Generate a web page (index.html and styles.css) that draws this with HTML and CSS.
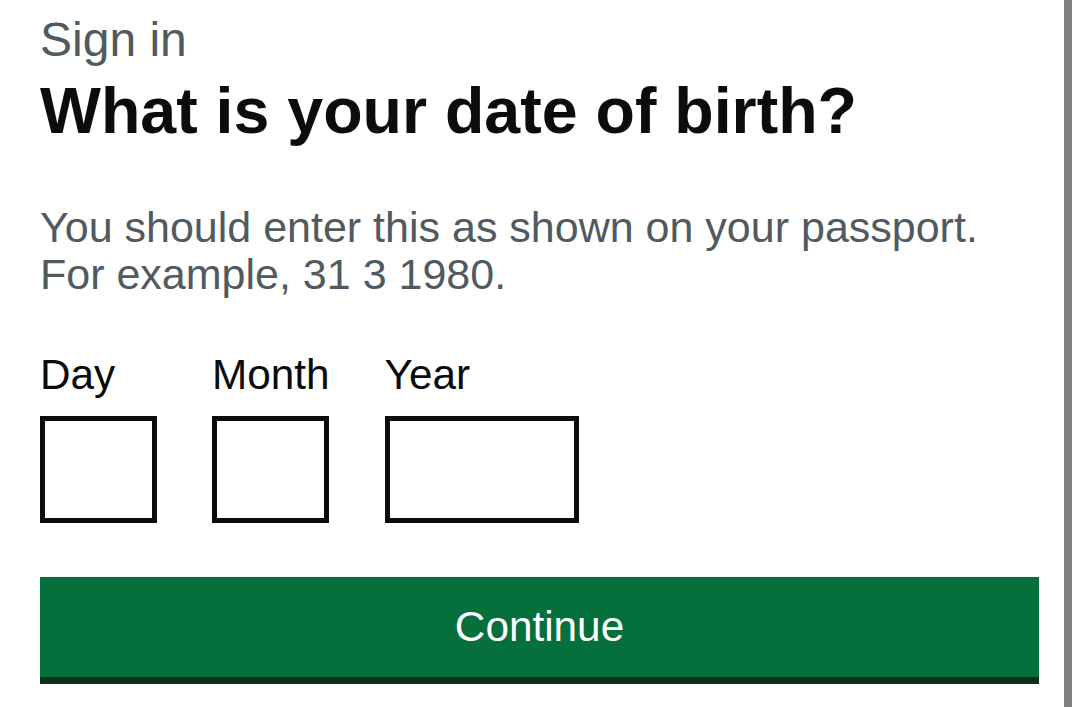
FILE: index.html
```html
<!DOCTYPE html>
<html lang="en">
<head>
<meta charset="utf-8">
<title>What is your date of birth?</title>
<link rel="stylesheet" href="styles.css">
</head>
<body>
<div class="frame">
  <main class="page">
    <span class="caption">Sign in</span>
    <h1 class="heading">What is your date of birth?</h1>
    <p class="hint">You should enter this as shown on your passport.<br>For example, 31 3 1980.</p>
    <div class="date-input">
      <div class="date-item">
        <label class="date-label" for="dob-day">Day</label>
        <input class="date-field w2" id="dob-day" type="text" inputmode="numeric">
      </div>
      <div class="date-item">
        <label class="date-label" for="dob-month">Month</label>
        <input class="date-field w2" id="dob-month" type="text" inputmode="numeric">
      </div>
      <div class="date-item">
        <label class="date-label" for="dob-year">Year</label>
        <input class="date-field w4" id="dob-year" type="text" inputmode="numeric">
      </div>
    </div>
    <button class="button" type="submit">Continue</button>
  </main>
  <div class="scrollbar"></div>
</div>
</body>
</html>
```

FILE: styles.css
```css
* { box-sizing: border-box; }

html, body {
  margin: 0;
  padding: 0;
  background: #ffffff;
}

body {
  font-family: "Liberation Sans", Arial, sans-serif;
  color: #0b0c0c;
  width: 1080px;
  height: 707px;
  overflow: hidden;
}

.frame {
  display: flex;
  height: 707px;
}

.page {
  width: 1064px;
  padding: 13px 25px 0 40px;
  display: flex;
  flex-direction: column;
  align-items: flex-start;
}

.scrollbar {
  width: 8px;
  height: 100%;
  background: #808080;
}

.caption {
  display: block;
  font-size: 48px;
  line-height: 54px;
  color: #505a5f;
}

.heading {
  margin: 8px 0 0;
  font-size: 64.5px;
  line-height: 72px;
  font-weight: 700;
  color: #0b0c0c;
}

.hint {
  margin: 57px 0 0;
  font-size: 43px;
  line-height: 47px;
  color: #505a5f;
}

.date-input {
  display: flex;
  gap: 55px;
  margin-top: 53px;
}

.date-item {
  display: flex;
  flex-direction: column;
}

.date-label {
  font-size: 42.3px;
  line-height: 47px;
  color: #0b0c0c;
  margin-bottom: 18px;
}

.date-field {
  height: 107px;
  border: 5px solid #0b0c0c;
  border-radius: 0;
  background: #ffffff;
  font: inherit;
  font-size: 42px;
  padding: 0 10px;
  outline: none;
}

.w2 { width: 117px; }
.w4 { width: 194px; }

.button {
  margin-top: 54px;
  width: 999px;
  height: 100px;
  border: 0;
  border-radius: 0;
  background: #06703c;
  box-shadow: 0 7px 0 #0e2f1c;
  color: #ffffff;
  font-family: "Liberation Sans", Arial, sans-serif;
  font-size: 42.3px;
  line-height: 1;
  padding: 0;
  cursor: pointer;
}
```
